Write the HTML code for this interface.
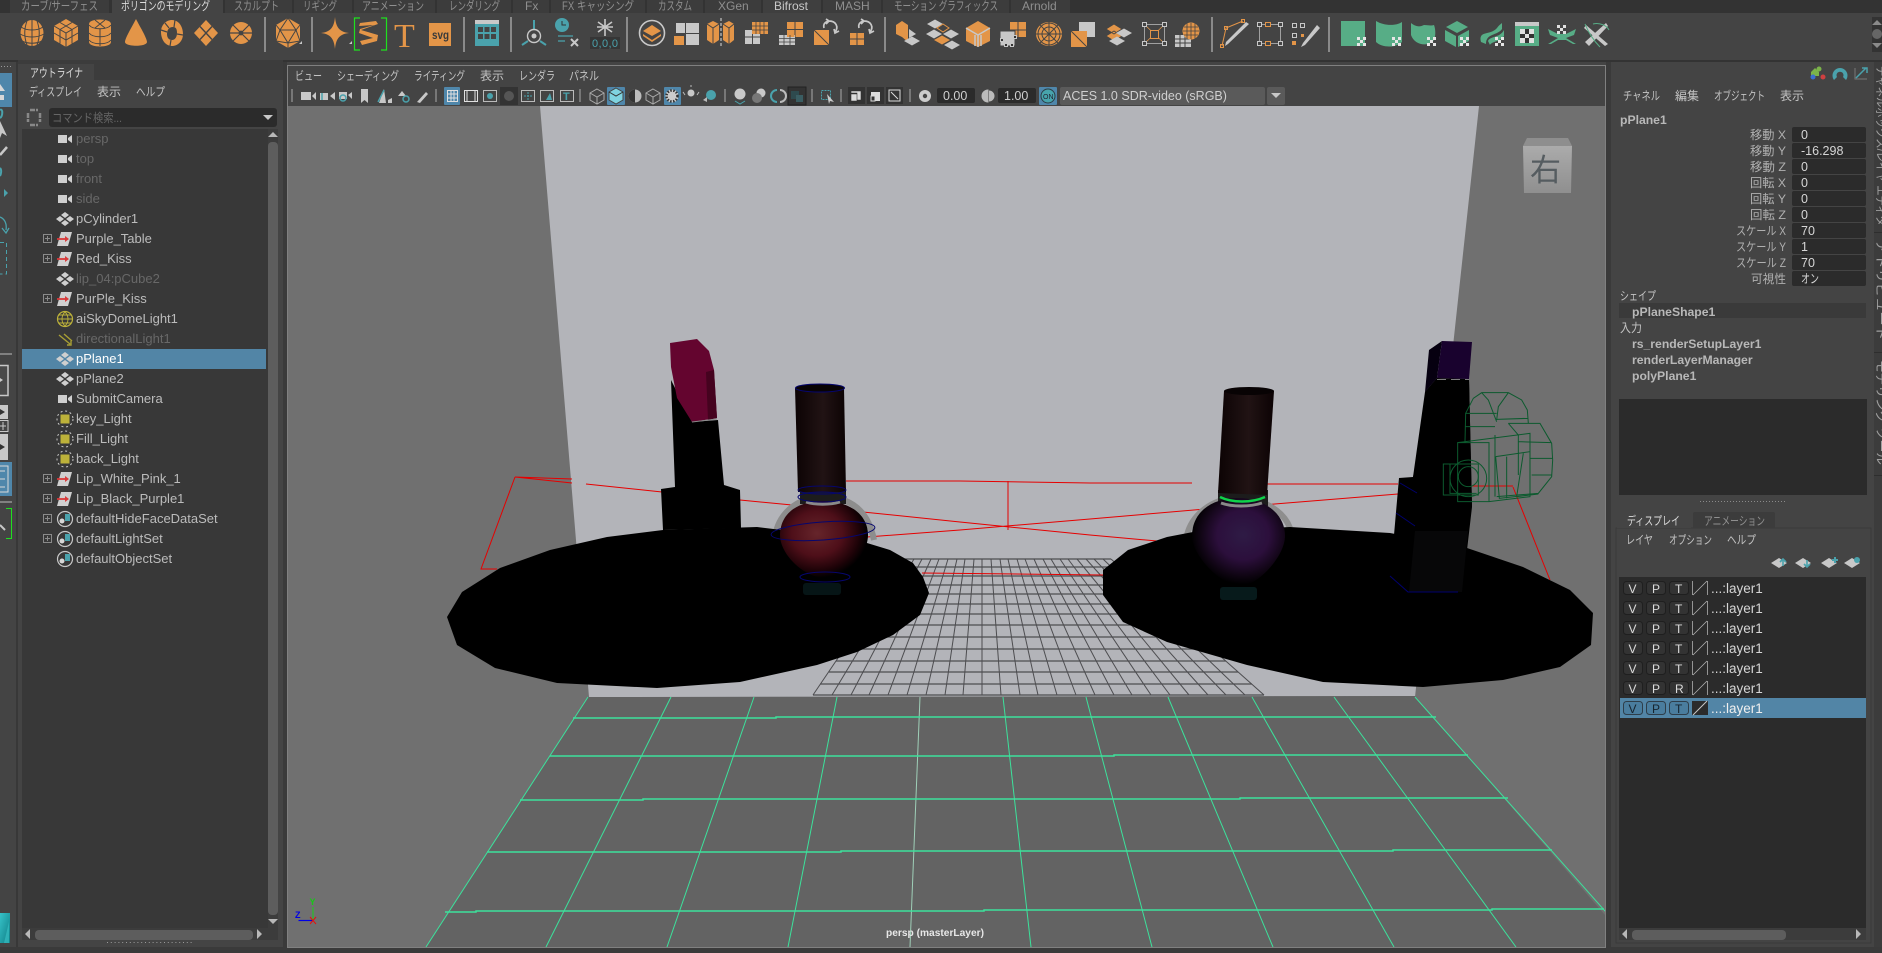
<!DOCTYPE html>
<html lang="ja"><head><meta charset="utf-8"><title>Maya</title>
<style>
html,body{margin:0;padding:0;background:#444;width:1882px;height:953px;overflow:hidden}
svg{display:block}
text{font-family:"Liberation Sans","Noto Sans CJK JP",sans-serif;font-size:12px;fill:#bdbdbd}
.t{font-size:12px;fill:#8f8f8f}
.m{font-size:12px;fill:#c4c4c4}
.r{font-size:13px;fill:#bcbcbc}
.d{font-size:13px;fill:#686868}
.l{font-size:12px;fill:#b0b0b0}
.v{font-size:12.5px;fill:#d6d6d6}
.y{font-size:13.5px;fill:#d6d6d6}
.b{font-size:12.2px;font-weight:bold;fill:#b8b8b8}
.k{font-size:12px;fill:#dcdcdc}
.o{fill:#e39548}
.g{fill:#c8c8c8}
.e{fill:#4aa2ac}
.n{fill:#57ad86}
</style></head><body>
<svg xmlns="http://www.w3.org/2000/svg" width="1882" height="953" viewBox="0 0 1882 953">
<defs>
<linearGradient id="cap" x1="0" x2="1" y1="0" y2="0"><stop offset="0" stop-color="#0c0304"/><stop offset=".55" stop-color="#211314"/><stop offset="1" stop-color="#0c0304"/></linearGradient>
<radialGradient id="rb" cx=".42" cy=".42" r=".58"><stop offset="0" stop-color="#66252b"/><stop offset=".5" stop-color="#4e0f19"/><stop offset=".82" stop-color="#1f0308"/><stop offset="1" stop-color="#000"/></radialGradient>
<radialGradient id="pb" cx=".55" cy=".42" r=".56"><stop offset="0" stop-color="#2e1b45"/><stop offset=".5" stop-color="#2c0f3c"/><stop offset=".82" stop-color="#100514"/><stop offset="1" stop-color="#000"/></radialGradient>
<linearGradient id="cube" x1="0" x2="0" y1="0" y2="1"><stop offset="0" stop-color="#ababab"/><stop offset="1" stop-color="#8f8f8f"/></linearGradient>
<linearGradient id="logo" x1="0" x2="1" y1="0" y2="1"><stop offset="0" stop-color="#36c2c8"/><stop offset="1" stop-color="#0e7e86"/></linearGradient>
<g id="cam"><rect x="58" y="-4" width="9" height="8" fill="#cfcfcf"/><path d="M68 -1 L72 -4 V4 L68 1Z" fill="#cfcfcf"/></g>
<g id="mesh" fill="#cfcfcf"><path d="M65 -7 L69 -4 L65 -1 L61 -4Z M65 1 L69 4 L65 7 L61 4Z M60 -3 L64 0 L60 3 L56 0Z M70 -3 L74 0 L70 3 L66 0Z"/></g>
<g id="grp"><path d="M61 -7 H72 L68 7 H57Z" fill="#cfcfcf"/><path d="M57 0 H67" stroke="#d83a3a" stroke-width="1.800"/><path d="M65 -3 L69 0 L65 3Z" fill="#d83a3a"/></g>
<g id="plus"><rect x="43.5" y="-4.5" width="8" height="8" fill="none" stroke="#8a8a8a"/><path d="M45 -.5 H50 M47.5 -3 V2" stroke="#8a8a8a"/></g>
<g id="set"><circle cx="65" cy="0" r="7.5" fill="none" stroke="#c8c8c8" stroke-width="1.2"/><rect x="65" y="-5" width="5" height="7" fill="#4aa2ac"/><circle cx="62" cy="2" r="2.5" fill="#d8d8d8"/></g>
<g id="lit"><rect x="60.500" y="-4.500" width="9" height="9" fill="#bdb23a"/><circle cx="65" cy="0" r="8" fill="none" stroke="#c8c8c8" stroke-dasharray="2 2.7"/></g>
<g id="btn"><rect x=".5" y=".5" width="19" height="13" rx="3" fill="#333" stroke="#1f1f1f"/></g>
<g id="dia" class="g"><path d="M0 -5 L8 0 L0 5 L-8 0Z"/></g>
<g id="gd" fill="#c8c8c8"><path d="M0 -4.500 L8 0 L0 4.500 L-8 0Z"/></g>
<g id="gor" fill="#e39548"><path d="M0 -4.500 L8 0 L0 4.500 L-8 0Z"/></g>
</defs>

<!-- base -->
<rect width="1882" height="953" fill="#444"/>
<rect width="1882" height="13" fill="#333"/>
<rect y="60" width="1882" height="2" fill="#333"/>
<rect x="0" y="947" width="1882" height="6" fill="#3a3a3a"/>

<!-- shelf tabs -->
<g fill="#3c3c3c">
<rect x="10" width="99" height="13"/><rect x="225" width="67" height="13"/><rect x="294" width="58" height="13"/><rect x="354" width="81" height="13"/><rect x="437" width="74" height="13"/><rect x="513" width="36" height="13"/><rect x="551" width="94" height="13"/><rect x="647" width="56" height="13"/><rect x="705" width="56" height="13"/><rect x="823" width="58" height="13"/><rect x="883" width="126" height="13"/><rect x="1011" width="59" height="13"/>
</g>
<rect x="112" width="111" height="13" fill="#444"/><rect x="763" width="58" height="13" fill="#3f3f3f"/>
<g class="t">
<text class="t" x="21" y="10" textLength="77" lengthAdjust="spacingAndGlyphs">カーブ/サーフェス</text>
<text class="t" x="121" y="10" textLength="89" lengthAdjust="spacingAndGlyphs" style="fill:#ddd">ポリゴンのモデリング</text>
<text class="t" x="234" y="10" textLength="45" lengthAdjust="spacingAndGlyphs">スカルプト</text>
<text class="t" x="303" y="10" textLength="34" lengthAdjust="spacingAndGlyphs">リギング</text>
<text class="t" x="362" y="10" textLength="62" lengthAdjust="spacingAndGlyphs">アニメーション</text>
<text class="t" x="449" y="10" textLength="51" lengthAdjust="spacingAndGlyphs">レンダリング</text>
<text class="t" x="525" y="10">Fx</text>
<text class="t" x="562" y="10" textLength="72" lengthAdjust="spacingAndGlyphs">FX キャッシング</text>
<text class="t" x="658" y="10" textLength="34" lengthAdjust="spacingAndGlyphs">カスタム</text>
<text class="t" x="718" y="10">XGen</text>
<text class="t" x="774" y="10" style="fill:#c8c8c8">Bifrost</text>
<text class="t" x="835" y="10">MASH</text>
<text class="t" x="894" y="10" textLength="104" lengthAdjust="spacingAndGlyphs">モーション グラフィックス</text>
<text class="t" x="1022" y="10">Arnold</text>
</g>

<!-- shelf separators -->
<g fill="#8a8a8a">
<rect x="264" y="17" width="2" height="35"/><rect x="311" y="17" width="2" height="35"/><rect x="463" y="17" width="2" height="35"/><rect x="510" y="17" width="2" height="35"/><rect x="626" y="17" width="2" height="35"/><rect x="884" y="17" width="2" height="35"/><rect x="1211" y="17" width="2" height="35"/><rect x="1328" y="17" width="2" height="35"/>
</g>

<!-- shelf icons: poly primitives -->
<g class="o">
<g transform="translate(32,33)"><ellipse rx="11.5" ry="13"/><path d="M-11 -6 C-5 -2 5 -2 11 -6 M-12 1 C-5 5 5 5 12 1 M-10 8 C-4 11 4 11 10 8 M0 -13 V13 M-5 -12 C-8 -4 -8 4 -5 12 M5 -12 C8 -4 8 4 5 12" fill="none" stroke="#444" stroke-width="1"/></g>
<g transform="translate(66,33)"><path d="M0 -14 L12 -7 V7 L0 14 L-12 7 V-7Z"/><path d="M-12 -7 L0 0 L12 -7 M0 0 V14 M-6 -10.5 L6 -3.5 M6 -10.5 L-6 -3.5 M-12 0 L0 7 L12 0 M-6 -3.5 V10.5 M6 -3.5 V10.5" fill="none" stroke="#444" stroke-width="1"/></g>
<g transform="translate(100,33)"><path d="M-11 -9 C-11 -15 11 -15 11 -9 V9 C11 15 -11 15 -11 9Z"/><path d="M-11 -8 C-7 -3 7 -3 11 -8 M-11 0 C-7 5 7 5 11 0 M-11 7 C-7 12 7 12 11 7 M0 -4 V13 M-5 -13 L5 -5 M5 -13 L-5 -5" fill="none" stroke="#444" stroke-width="1"/></g>
<g transform="translate(136,33)"><path d="M0 -14 C3 -8 11 5 11 9 C11 14 -11 14 -11 9 C-11 5 -3 -8 0 -14Z"/></g>
<g transform="translate(172,33)"><path d="M0 -13 C7 -13 11 -6 11 1 C11 8 6 13 0 13 C-7 13 -11 6 -11 -1 C-11 -8 -6 -13 0 -13Z M1 -6 C-3 -6 -5 -3 -5 1 C-5 5 -3 7 0 7 C3 7 5 4 5 0 C5 -4 4 -6 1 -6Z" fill-rule="evenodd"/><path d="M-11 -3 L-5 -1 M-7 -10 L-3 -5 M3 -13 L2 -6 M11 2 L5 1 M-2 13 L-1 7" stroke="#444" stroke-width="1.2"/></g>
<g transform="translate(206,33)"><path d="M0 -13 L12 0 L0 13 L-12 0Z"/><path d="M-6 -6.5 L6 6.5 M6 -6.5 L-6 6.5" stroke="#444" stroke-width="1.4"/></g>
<g transform="translate(241,33)"><circle r="11"/><path d="M-11 0 H11 M-8 -8 L8 8 M8 -8 L-8 8" stroke="#444" stroke-width="1.2"/><circle r="2.4" fill="#444"/></g>
<g transform="translate(288,33)"><path d="M0 -15 L12 -8 V8 L0 15 L-12 8 V-8Z"/><path d="M0 -15 L-8 -3 L8 -3Z M-8 -3 L0 10 L8 -3 M-12 -8 L-8 -3 M12 -8 L8 -3 M-12 8 L0 10 L12 8 M0 10 V15 M-12 8 L-8 -3 M12 8 L8 -3" fill="none" stroke="#444" stroke-width="1"/></g>
<path transform="translate(335,33)" d="M0 -16 C1 -5 5 -1 14 0 C5 1 1 5 0 16 C-1 5 -5 1 -14 0 C-5 -1 -1 -5 0 -16Z"/>
<g transform="translate(369,33)"><path d="M-9 -10 L7 -12 L9 -9 L-8 -3 L9 2 L8 8 L-7 12 L-9 8 L4 5 L-10 0 L-9 -4 L5 -8 L-10 -7Z"/></g>
<rect x="429" y="23" width="22" height="23"/>
<g transform="translate(652,33)" fill="none"><circle r="12.5" stroke="#c8c8c8" stroke-width="1.6"/><path d="M0 -8 L9 -2 L0 3 L-9 -2Z" fill="#e39548"/><path d="M-9 1 L0 7 L9 1 L9 3 L0 9 L-9 3Z" fill="#e39548"/></g>
</g>
<g fill="#c8c8c8"><path d="M302 44 H299 L302 41Z M352 44 H349 L352 41Z"/></g>
<path d="M360 18 H354.5 V50 H360 M381 18 H386.5 V50 H381" fill="none" stroke="#1fe01f" stroke-width="1.2"/>
<text x="394" y="47" style="font-family:'Liberation Serif',serif;font-size:34px;fill:#e39548">T</text>
<text x="432" y="39" style="font-size:12px;font-weight:bold;fill:#3a3a3a" textLength="17" lengthAdjust="spacingAndGlyphs">svg</text>

<!-- teal icons -->
<g transform="translate(487,33)"><rect x="-12" y="-13" width="24" height="26" fill="#4aa2ac"/><rect x="-12" y="-13" width="24" height="4" fill="#c8c8c8"/><g fill="#444"><rect x="-9" y="-6" width="5" height="5"/><rect x="-2.500" y="-6" width="5" height="5"/><rect x="4" y="-6" width="5" height="5"/><rect x="-9" y="1" width="5" height="5"/><rect x="-2.500" y="1" width="5" height="5"/><rect x="4" y="1" width="5" height="5"/></g></g>
<g transform="translate(534,33)" fill="none"><path d="M0 -13 V-4" stroke="#4aa2ac" stroke-width="2"/><circle r="6.500" cy="3" stroke="#c8c8c8" stroke-width="1.400"/><circle cy="3" r="2.500" fill="#c8c8c8"/><path d="M-12 12 L-6 8 M12 12 L6 8" stroke="#4aa2ac" stroke-width="2"/></g>
<g transform="translate(567,33)"><circle cx="-5" cy="-8" r="7" fill="#4aa2ac"/><path d="M-5 -12 V-8 H-1" stroke="#333" fill="none"/><path d="M-9 3 H6 M-9 8 H-2" stroke="#4aa2ac" stroke-width="1.300"/><path d="M4 6 L11 13 M11 6 L4 13" stroke="#c8c8c8" stroke-width="2"/></g>
<g transform="translate(605,33)"><rect x="-15" y="4" width="30" height="12" fill="#363636"/><path d="M0 -14 V3 M-7 -11 L7 -1 M7 -11 L-7 -1 M-8 -6 H8" stroke="#c8c8c8" stroke-width="1.600"/><text x="-13" y="14" style="font-size:11px;fill:#4aa2ac" textLength="26">0,0,0</text></g>

<!-- squares icon 683 -->
<g fill="#c8c8c8"><rect x="676" y="23" width="9" height="10"/><rect x="686" y="23" width="13" height="10"/><rect x="686" y="34" width="13" height="11"/></g>
<rect x="674" y="36" width="10" height="9" fill="#e39548"/>

<!-- 720 split prisms -->
<g class="o"><path d="M707 24 L713 21 L719 24 V40 L713 44 L707 40Z"/><path d="M723 24 L729 21 L734 24 V40 L729 44 L723 40Z"/></g>
<path d="M707 24 L713 28 L719 24 M713 28 V44 M723 24 L729 28 L734 24 M729 28 V44" stroke="#444" fill="none"/>
<path d="M721 18 V48" stroke="#ddd" stroke-dasharray="3 2"/>
<!-- 756 -->
<g fill="#c8c8c8"><rect x="745" y="30" width="7" height="6.500"/><rect x="753" y="30" width="7" height="6.500"/><rect x="745" y="37.500" width="7" height="6.500"/><rect x="753" y="37.500" width="7" height="6.500"/></g>
<rect x="752" y="22" width="16" height="12" class="o"/><path d="M756 22 V34 M760 22 V34 M764 22 V34 M752 26 H768 M752 30 H768" stroke="#444" stroke-width=".8"/>
<!-- 791 -->
<g class="o"><rect x="787" y="22" width="7.500" height="7"/><rect x="795.500" y="22" width="7.500" height="7"/><rect x="795.500" y="30" width="7.500" height="7"/><rect x="787" y="30" width="7.500" height="7" style="display:none"/></g>
<rect x="779" y="35" width="16" height="10" fill="#c8c8c8"/><rect x="787" y="30" width="7.500" height="7" class="o"/><path d="M784 35 V45 M790 35 V45 M779 38.500 H795 M779 42 H795" stroke="#444" stroke-width=".8"/>
<!-- 827 -->
<rect x="814" y="30" width="15" height="15" class="o"/><path d="M814 30 L829 45" stroke="#444"/>
<path d="M829 21 C836 21 839 27 835 32 M824 28 C823 24 825 22 829 21 M826 19 L829 21 L826 24 M834 29 L835 33 L839 31" stroke="#c8c8c8" stroke-width="1.700" fill="none"/>
<!-- 861 -->
<g class="o"><rect x="850" y="33" width="6.500" height="5.500"/><rect x="857.500" y="33" width="6.500" height="5.500"/><rect x="850" y="39.500" width="6.500" height="5.500"/><rect x="857.500" y="39.500" width="6.500" height="5.500"/></g>
<path d="M864 21 C871 21 874 27 870 32 M859 28 C858 24 860 22 864 21 M861 19 L864 21 L861 24 M869 29 L870 33 L874 31" stroke="#c8c8c8" stroke-width="1.700" fill="none"/>
<!-- 905 -->
<path d="M896 25 L902 21 L908 25 V42 L902 37 L896 34Z" class="o"/><path d="M909 29 L916 34 L909 38Z" fill="#c8c8c8"/>
<use href="#gd" x="912" y="41" transform=""/>
<!-- 941 -->
<use href="#gd" x="935" y="24"/><path d="M943 24 L949 28 L943 32 L937 28Z" fill="none" stroke="#e39548"/>
<use href="#gd" x="934" y="34"/><use href="#gd" x="951" y="34"/><use href="#gor" x="942" y="40"/><use href="#gd" x="952" y="45"/>
<!-- 977 -->
<path d="M978 21 L990 28 V41 L978 47 L966 41 V28Z" class="o"/><path d="M966 28 L978 35 L990 28 M978 35 V47 M975 35 V46 M981 35 V46" stroke="#c8c8c8" fill="none" stroke-width="1.500"/>
<!-- 1012 -->
<rect x="1010" y="22" width="16" height="15" class="o"/><rect x="1000" y="31" width="15" height="15" fill="#c8c8c8" stroke="#444"/><path d="M1018 22 V37 M1010 30 H1026" stroke="#444"/>
<g fill="#333" stroke="#c8c8c8"><rect x="1000.500" y="38.500" width="3" height="3"/><rect x="1004.500" y="43.500" width="3" height="3"/><rect x="1010.500" y="43.500" width="3" height="3"/><rect x="1013.500" y="35.500" width="3" height="3"/></g>
<!-- 1047 -->
<ellipse cx="1049" cy="34" rx="13" ry="12" class="o"/><path d="M1036 34 H1062 M1049 22 V46 M1040 25 L1058 43 M1058 25 L1040 43" stroke="#444"/><circle cx="1049" cy="34" r="7" fill="none" stroke="#444"/><circle cx="1049" cy="34" r="11" fill="none" stroke="#444"/>
<!-- 1084 -->
<rect x="1079" y="22" width="16" height="15" fill="#c8c8c8"/><rect x="1071" y="31" width="16" height="16" class="o"/><path d="M1071 31 L1087 47" stroke="#444"/>
<!-- 1117 -->
<path d="M1114 24 L1122 29 L1114 34 L1106 29Z M1114 31 L1122 36 L1114 41 L1106 36Z" class="o" stroke="#444" stroke-width=".8"/>
<use href="#gd" x="1124" y="33"/><use href="#gd" x="1117" y="41"/>
<!-- 1154 -->
<rect x="1144.500" y="24.500" width="20" height="19" fill="none" stroke="#a0a0a0"/><path d="M1145 25 L1164 43 M1164 25 L1145 43" stroke="#e39548" stroke-width=".8"/><rect x="1150.500" y="30.500" width="8" height="8" fill="#444" stroke="#e39548"/>
<g fill="#444" stroke="#c8c8c8"><rect x="1142.500" y="22.500" width="4" height="4"/><rect x="1162.500" y="22.500" width="4" height="4"/><rect x="1142.500" y="41.500" width="4" height="4"/><rect x="1162.500" y="41.500" width="4" height="4"/></g>
<!-- 1188 -->
<rect x="1175" y="35" width="16" height="12" fill="#c8c8c8"/><path d="M1180 35 V47 M1185 35 V47 M1175 39 H1191 M1175 43 H1191" stroke="#444"/>
<ellipse cx="1191" cy="31" rx="8.500" ry="8.500" class="o"/><path d="M1183 31 H1199 M1191 23 V39 M1184 27 H1198 M1184 35 H1198 M1187 23 V39 M1195 23 V39" stroke="#444" stroke-width=".8"/>
<!-- 1236 -->
<path d="M1222 46 L1226 28 L1243 21" stroke="#e39548" fill="none"/><path d="M1249 24 L1228 44 L1225 46 L1226 42 L1246 22Z" fill="#c8c8c8"/>
<g fill="none" stroke="#e39548"><rect x="1220.500" y="44.500" width="3" height="3"/><rect x="1224.500" y="26.500" width="3" height="3"/><rect x="1241.500" y="19.500" width="3" height="3"/></g>
<!-- 1269 -->
<rect x="1259.500" y="24.500" width="21" height="19" fill="none" stroke="#a0a0a0"/><rect x="1265.500" y="22.500" width="5" height="4" fill="#444" stroke="#e39548"/><rect x="1265.500" y="41.500" width="5" height="4" fill="#444" stroke="#e39548"/>
<g fill="#444" stroke="#c8c8c8"><rect x="1257.500" y="22.500" width="4" height="4"/><rect x="1278.500" y="22.500" width="4" height="4"/><rect x="1257.500" y="41.500" width="4" height="4"/><rect x="1278.500" y="41.500" width="4" height="4"/></g>
<!-- 1304 -->
<g fill="#444" stroke="#c8c8c8"><rect x="1292.500" y="23.500" width="4" height="4"/><rect x="1300.500" y="23.500" width="4" height="4"/><rect x="1292.500" y="33.500" width="4" height="4"/></g>
<rect x="1292" y="41" width="4" height="4" fill="#e39548"/><rect x="1301" y="34" width="3" height="3" fill="#e39548"/>
<path d="M1317 25 L1303 43 L1301 47 L1305 45 L1320 28Z" fill="#c8c8c8"/>

<!-- green UV icons -->
<g class="n">
<rect x="1341" y="21" width="24" height="25"/>
<path d="M1376 21 C1384 26 1396 26 1402 22 V42 C1396 48 1382 48 1376 42Z"/>
<path d="M1411 23 C1416 27 1420 27 1424 25 C1428 25 1431 26 1434 25 C1436 30 1436 40 1432 42 C1425 47 1414 44 1411 35Z"/>
<path d="M1457 21 L1468 27 L1457 33 L1446 27Z"/><path d="M1445 30 L1456 36 V47 L1445 41Z"/><path d="M1469 30 L1458 36 V47 L1469 41Z"/>
<path d="M1481 42 C1478 30 1490 36 1497 28 C1499 25 1501 24 1502 23 V29 C1497 36 1486 33 1486 44Z"/><path d="M1488 41 C1490 36 1500 38 1504 30 V36 C1500 42 1492 41 1490 45Z"/>
<rect x="1515" y="23" width="24" height="23"/>
<path d="M1548 29 L1558 34 H1566 L1576 29 L1574 35 L1566 38 H1558 L1550 35Z"/><path d="M1548 44 L1558 38 H1566 L1576 44 L1573 44 L1566 40 H1558 L1551 44Z"/>
</g>
<rect x="1515" y="22" width="24" height="4" fill="#c8c8c8"/>
<rect x="1520" y="29" width="14" height="14" fill="#333"/>
<g fill="#e0e0e0"><rect x="1520" y="29" width="5" height="5"/><rect x="1529" y="29" width="5" height="5"/><rect x="1525" y="34" width="4" height="4"/><rect x="1520" y="38" width="5" height="5"/><rect x="1529" y="38" width="5" height="5"/></g>
<g fill="#e0e0e0"><rect x="1557" y="25" width="3" height="3"/><rect x="1563" y="25" width="3" height="3"/><rect x="1560" y="28" width="3" height="3"/><rect x="1557" y="31" width="3" height="3"/><rect x="1563" y="31" width="3" height="3"/></g>
<path d="M1585 42 L1606 23 L1608 26 L1589 46Z M1586 25 L1608 44 L1605 46 L1584 28Z" fill="#c8c8c8"/>
<path d="M1585 24 C1590 36 1595 42 1600 47 M1593 24 C1600 22 1607 26 1609 30" stroke="#57ad86" fill="none"/>
<g id="chk" fill="#e6e6e6"><rect x="1357" y="37" width="3" height="3"/><rect x="1363" y="37" width="3" height="3"/><rect x="1360" y="40" width="3" height="3"/><rect x="1357" y="43" width="3" height="3"/><rect x="1363" y="43" width="3" height="3"/></g>
<use href="#chk" x="35"/><use href="#chk" x="70"/><use href="#chk" x="103"/><use href="#chk" x="138"/>
<rect x="1872" y="17" width="10" height="35" fill="#333"/>
<path d="M1877 20 L1882 25 H1872Z M1877 48 L1872 43 H1882Z" fill="#8a8a8a"/><circle cx="1877" cy="34" r="5" fill="#666"/>

<!-- left toolbox -->
<rect x="16" y="62" width="2" height="885" fill="#383838"/>
<g fill="#9a9a9a"><rect x="1" y="66" width="1" height="1"/><rect x="4" y="66" width="1" height="1"/><rect x="7" y="66" width="1" height="1"/><rect x="10" y="66" width="1" height="1"/></g>
<rect y="73" width="12" height="34" fill="#4f87ab"/>
<path d="M0 84 L5 91 H0Z M0 95 H4 V100 H0Z" fill="#d8d8d8"/>
<path d="M0 110 C3 108 3 116 0 118" fill="none" stroke="#4aa2ac" stroke-width="2"/>
<path d="M0 121 L7 136 L2 133 L0 138Z" fill="#c8c8c8"/>
<path d="M0 155 L7 147" stroke="#c8c8c8" stroke-width="2.500"/>
<path d="M0 168 C2 170 1 174 0 176" stroke="#4aa2ac" fill="none" stroke-width="2"/>
<path d="M4 189 L8 193 L4 197Z" fill="#4aa2ac"/>
<path d="M0 217 C5 219 7 224 6 230 M2 228 L6 233 L9 228" stroke="#4aa2ac" fill="none" stroke-width="1.300"/>
<path d="M0 242.500 H6.500 V274 H0" fill="none" stroke="#4aa2ac" stroke-dasharray="4 3"/>
<rect y="353" width="12" height="2" fill="#808080"/>
<rect x="-1" y="365.500" width="9" height="30" fill="#4a4a4a" stroke="#c8c8c8" stroke-width="1.500"/><path d="M0 378 L3 380 L0 382Z" fill="#ccc"/>
<rect y="405" width="8" height="14" fill="#c8c8c8"/><path d="M0 409 L5 412 L0 415Z" fill="#333"/>
<rect x="-1" y="420.500" width="9" height="11" fill="none" stroke="#c8c8c8"/><path d="M0 426 H6 M3 422 V430" stroke="#c8c8c8"/>
<rect y="434" width="8" height="26" fill="#c8c8c8"/><path d="M0 444 L5 447 L0 450Z" fill="#333"/>
<rect y="462" width="12" height="34" fill="#4f87ab"/>
<path d="M0 466 H8 V492 H0 M0 471 H5 M0 479 H5 M0 487 H5" stroke="#d8d8d8" fill="none"/>
<rect y="501" width="12" height="2" fill="#808080"/>
<path d="M6 508.500 H11.500 V538.500 H6" stroke="#1fe01f" fill="none"/>
<path d="M0 525 L5 530" stroke="#c8c8c8" stroke-width="2"/>
<rect y="913" width="10" height="30" fill="url(#logo)"/><path d="M4 943 L9 922 V943Z" fill="#3dc6c9" opacity=".6"/>

<!-- outliner -->
<rect x="18" y="60" width="265" height="4" fill="#3c3c3c"/>
<rect x="94" y="64" width="189" height="16" fill="#3c3c3c"/>
<path d="M20 80 V67 Q20 64 23 64 H91 Q94 64 94 67 V80Z" fill="#444"/>
<rect x="283" y="62" width="4" height="885" fill="#3a3a3a"/>
<text class="k" x="30" y="77" textLength="53" lengthAdjust="spacingAndGlyphs">アウトライナ</text>
<text class="m" x="29" y="96" textLength="53" lengthAdjust="spacingAndGlyphs">ディスプレイ</text>
<text class="m" x="97" y="96" textLength="24" lengthAdjust="spacingAndGlyphs">表示</text>
<text class="m" x="136" y="96" textLength="29" lengthAdjust="spacingAndGlyphs">ヘルプ</text>
<path d="M30 110 H38 M30 125 H38 M28 113 V122 M40 113 V122" stroke="#888" stroke-width="2.500" fill="none" stroke-dasharray="5 1"/>
<rect x="49" y="108" width="228" height="19" rx="3" fill="#2b2b2b"/>
<text x="52" y="122" style="font-size:12px;fill:#666" textLength="70" lengthAdjust="spacingAndGlyphs">コマンド検索...</text>
<path d="M263 115 H273 L268 120Z" fill="#c8c8c8"/>
<rect x="22" y="129" width="246" height="811" fill="#383838"/>
<rect x="268" y="129" width="10" height="811" fill="#3c3c3c"/>
<path d="M273 132 L278 137 H268Z" fill="#b8b8b8"/>
<rect x="268" y="142" width="10" height="773" rx="4" fill="#5d5d5d"/>
<path d="M273 924 L278 919 H268Z" fill="#b8b8b8"/>
<rect x="22" y="928" width="246" height="12" fill="#3c3c3c"/>
<path d="M25 934 L30 929 V939Z M262 934 L257 929 V939Z" fill="#b8b8b8"/>
<rect x="35" y="930" width="218" height="10" rx="4" fill="#5d5d5d"/>
<path d="M107 942.500 H192" stroke="#9a9a9a" stroke-dasharray="1 2.800"/>
<rect x="22" y="349" width="244" height="20" fill="#5285a6"/>
<use href="#cam" y="139"/><use href="#cam" y="159"/><use href="#cam" y="179"/><use href="#cam" y="199"/>
<use href="#mesh" y="219"/><use href="#grp" y="239"/><use href="#plus" y="239"/><use href="#grp" y="259"/><use href="#plus" y="259"/><use href="#mesh" y="279"/><use href="#grp" y="299"/><use href="#plus" y="299"/>
<g transform="translate(65,319)"><circle r="7.500" fill="none" stroke="#bdb23a" stroke-width="1.200"/><path d="M-7 0 H7 M0 -7 C-4 -3 -4 3 0 7 M0 -7 C4 -3 4 3 0 7 M-6 -4 H6 M-6 4 H6" stroke="#bdb23a" fill="none" stroke-width=".9"/></g>
<path d="M59 335 L70 344 M64 334 L72 341 M67 345 H71 V341" stroke="#a89f34" stroke-width="1.400" fill="none"/>
<use href="#mesh" y="359"/><use href="#mesh" y="379"/><use href="#cam" y="399"/>
<use href="#lit" y="419"/><use href="#lit" y="439"/><use href="#lit" y="459"/>
<use href="#grp" y="479"/><use href="#plus" y="479"/><use href="#grp" y="499"/><use href="#plus" y="499"/>
<use href="#set" y="519"/><use href="#plus" y="519"/><use href="#set" y="539"/><use href="#plus" y="539"/><use href="#set" y="559"/>
<g>
<text class="d" x="76" y="143">persp</text><text class="d" x="76" y="163">top</text><text class="d" x="76" y="183">front</text><text class="d" x="76" y="203">side</text>
<text class="r" x="76" y="223">pCylinder1</text><text class="r" x="76" y="243">Purple_Table</text><text class="r" x="76" y="263">Red_Kiss</text>
<text class="d" x="76" y="283">lip_04:pCube2</text><text class="r" x="76" y="303">PurPle_Kiss</text><text class="r" x="76" y="323">aiSkyDomeLight1</text>
<text class="d" x="76" y="343">directionalLight1</text>
<text class="r" x="76" y="363" style="fill:#fff">pPlane1</text><text class="r" x="76" y="383">pPlane2</text><text class="r" x="76" y="403">SubmitCamera</text>
<text class="r" x="76" y="423">key_Light</text><text class="r" x="76" y="443">Fill_Light</text><text class="r" x="76" y="463">back_Light</text>
<text class="r" x="76" y="483">Lip_White_Pink_1</text><text class="r" x="76" y="503">Lip_Black_Purple1</text>
<text class="r" x="76" y="523">defaultHideFaceDataSet</text><text class="r" x="76" y="543">defaultLightSet</text><text class="r" x="76" y="563">defaultObjectSet</text>
</g>

<!-- viewport chrome -->
<rect x="287" y="65" width="1319" height="883" fill="#808080"/>
<rect x="288" y="66" width="1317" height="40" fill="#444"/>
<g>
<text class="m" x="295" y="80" textLength="27" lengthAdjust="spacingAndGlyphs">ビュー</text>
<text class="m" x="337" y="80" textLength="62" lengthAdjust="spacingAndGlyphs">シェーディング</text>
<text class="m" x="414" y="80" textLength="51" lengthAdjust="spacingAndGlyphs">ライティング</text>
<text class="m" x="480" y="80" textLength="24" lengthAdjust="spacingAndGlyphs">表示</text>
<text class="m" x="519" y="80" textLength="36" lengthAdjust="spacingAndGlyphs">レンダラ</text>
<text class="m" x="569" y="80" textLength="30" lengthAdjust="spacingAndGlyphs">パネル</text>
</g>
<!-- viewport toolbar -->
<g fill="#777"><rect x="291" y="89" width="2" height="13"/><rect x="435" y="89" width="2" height="13"/><rect x="579" y="89" width="2" height="13"/><rect x="724" y="89" width="2" height="13"/><rect x="811" y="89" width="2" height="13"/><rect x="840" y="89" width="2" height="13"/><rect x="909" y="89" width="2" height="13"/></g>
<rect x="444" y="87" width="16" height="18" rx="1" fill="#4f87ab"/><rect x="607" y="87" width="18" height="18" rx="1" fill="#4f87ab"/><rect x="664" y="87" width="17" height="18" rx="1" fill="#4f87ab"/><rect x="500" y="87" width="18" height="18" fill="#333"/><rect x="788" y="87" width="18" height="18" fill="#333" stroke="#222"/>
<rect x="848" y="87" width="17" height="17" fill="#333"/><rect x="867" y="87" width="17" height="17" fill="#333"/><rect x="886" y="87" width="17" height="17" fill="#333"/>
<g fill="#c8c8c8">
<rect x="301" y="92" width="10" height="8"/><path d="M312 96 L316 92 V100Z"/>
<rect x="320" y="93" width="8" height="7" /><path d="M330 96 L335 92 V100Z"/>
<rect x="339" y="92" width="8" height="7"/><path d="M348 95 L352 92 V99Z"/>
<path d="M361 89 H368 V103 L364.500 100 L361 103Z"/>
<path d="M379 103 L384 89 L386 103Z"/><path d="M388 100 L392 98 V103 H388Z"/>
<path d="M398 96 L402 91 L406 96Z"/>
<path d="M417 102 L426 92 L428 94 L420 103Z"/>
</g>
<g fill="none" stroke="#4aa2ac" stroke-width="1.500"><path d="M322 93 V100" /><circle cx="343" cy="98" r="3"/><circle cx="406" cy="99" r="3"/><path d="M384 90 L378 102"/></g>
<g fill="none" stroke="#e0e0e0">
<rect x="447.500" y="90.500" width="10" height="11"/><path d="M451 91 V101 M454 91 V101 M448 94 H457 M448 98 H457"/>
<rect x="464.500" y="90.500" width="13" height="11"/><path d="M467 91 V101 M475 91 V101"/>
<rect x="483.500" y="90.500" width="13" height="11" stroke="#bbb"/><rect x="521.500" y="90.500" width="13" height="11" stroke="#bbb"/><rect x="540.500" y="90.500" width="13" height="11" stroke="#bbb"/><rect x="560.500" y="90.500" width="13" height="11" stroke="#bbb"/>
<path d="M597 89 L604 93 V100 L597 104 L590 100 V93Z M590 93 L597 97 L604 93 M597 97 V104" stroke="#aaa"/>
<path d="M653 89 L660 93 V100 L653 104 L646 100 V93Z M646 93 L653 97 L660 93 M653 97 V104" stroke="#aaa"/>
</g>
<circle cx="490" cy="96" r="3" fill="#4aa2ac"/><circle cx="509" cy="96" r="5" fill="#555"/>
<path d="M524 96 H532 M528 92 V100" stroke="#4aa2ac" stroke-dasharray="2 1"/><path d="M546 100 L550 93 L552 100Z" fill="#4aa2ac"/><text x="563" y="100" style="font-size:11px;fill:#4aa2ac;font-weight:bold">T</text>
<path d="M616 88 L623 92 V100 L616 104 L609 100 V92Z" fill="#7fd3e0" stroke="#444"/><path d="M609 92 L616 96 L623 92" fill="none" stroke="#333"/>
<circle cx="635" cy="96" r="6.500" fill="#bbb"/><path d="M635 89.500 A6.500 6.500 0 0 0 635 102.500Z" fill="#333"/>
<circle cx="672" cy="96" r="6.500" fill="#ccc"/><circle cx="672" cy="96" r="5.500" fill="none" stroke="#333" stroke-dasharray="1.500 1.500" stroke-width="2.500"/>
<circle cx="691" cy="93" r="3.500" fill="#c8c8c8"/><path d="M685 95 L683 92 M697 95 L699 92 M691 87 V85" stroke="#bbb"/>
<circle cx="711" cy="95" r="5" fill="#4aa2ac"/><path d="M703 100 L707 97 L707 102Z" fill="#bbb"/>
<circle cx="740" cy="94" r="5.500" fill="#c8c8c8"/><path d="M735 101 L740 104 L745 101" stroke="#4aa2ac" fill="none"/>
<circle cx="761" cy="93" r="4.500" fill="#c8c8c8"/><circle cx="757" cy="98" r="5" fill="#777"/>
<path d="M777 90 A6 6 0 0 0 777 102" stroke="#4aa2ac" fill="none" stroke-width="2"/><path d="M780 90 A6 6 0 0 1 780 102" stroke="#bbb" fill="none" stroke-width="2"/>
<rect x="791" y="91" width="8" height="8" fill="#2e4a4e"/><rect x="796" y="95" width="7" height="7" fill="#3a5d62"/>
<rect x="821.500" y="90.500" width="9" height="9" fill="none" stroke="#4aa2ac" stroke-dasharray="2 1"/><path d="M827 94 L834 102 L830 101 L829 104Z" fill="#ccc"/>
<path d="M851 91 H861 V100 H857 V93 H851Z M851 94 H857 V101 H851Z" fill="#ddd" stroke="#333" stroke-width=".6"/>
<path d="M871 92 H880 V101 H875 V96 H871Z" fill="#ddd"/><rect x="871" y="96" width="4" height="5" fill="none" stroke="#ddd"/>
<rect x="889" y="90" width="11" height="11" fill="none" stroke="#ddd"/><path d="M891 92 L898 99" stroke="#ddd"/>
<circle cx="925" cy="96" r="6" fill="#ccc"/><circle cx="925" cy="96" r="2.200" fill="#444"/>
<rect x="937" y="88" width="38" height="15" rx="2" fill="#2b2b2b"/>
<text x="943" y="100" style="font-size:12.500px;fill:#cfcfcf">0.00</text>
<path d="M988 90 A6 6 0 0 0 988 102Z M989 91 A5 5 0 0 1 989 101" fill="#bbb" stroke="#bbb"/>
<rect x="998" y="88" width="38" height="15" rx="2" fill="#2b2b2b"/>
<text x="1004" y="100" style="font-size:12.500px;fill:#cfcfcf">1.00</text>
<rect x="1039" y="87" width="18" height="18" rx="1" fill="#4f87ab"/><circle cx="1048" cy="96" r="7" fill="#47a4ac" stroke="#2c3e44"/><text x="1043" y="99" style="font-size:7px;fill:#223">ON</text>
<rect x="1060" y="87" width="205" height="18" rx="2" fill="#5a5a5a"/>
<text x="1063" y="100" style="font-size:12.500px;fill:#cfcfcf">ACES 1.0 SDR-video (sRGB)</text>
<rect x="1267" y="87" width="18" height="18" rx="2" fill="#5a5a5a"/><path d="M1271 93 H1281 L1276 98Z" fill="#c8c8c8"/>

<!-- 3D viewport -->
<svg x="288" y="106" width="1317" height="841" viewBox="288 106 1317 841">
<rect x="288" y="106" width="1317" height="841" fill="#707070"/>
<polygon points="540,106 1479,106 1415,697 589,697" fill="#b3b4b9"/>
<polygon points="588,697 1415,696 1605,915 1605,947 426,947" fill="#636363"/>
<!-- pale plane grid -->
<g stroke="#4d4d50" stroke-width="1" fill="none">
<path d="M905 559L813 695M914 559L832 695M922 559L851 695M931 559L869 695M939 559L888 695M948 559L907 695M957 559L926 695M965 559L945 695M974 559L963 695M982 559L982 695M991 559L1001 695M1000 559L1020 695M1008 559L1038 695M1017 559L1057 695M1025 559L1076 695M1034 559L1095 695M1043 559L1114 695M1051 559L1132 695M1060 559L1151 695M1068 559L1170 695M1077 559L1189 695M1086 559L1208 695M1094 559L1226 695M1103 559L1245 695M1111 559L1264 695"/>
<path d="M905 559H1111M900 567H1120M893 576H1130M887 585H1140M881 594H1150M875 604H1162M868 614H1173M860 625H1185M852 637H1199M844 649H1212M836 661H1226M829 672H1238M820 684H1252M813 695H1264" stroke-width="1.200"/>
</g>
<!-- floor grid -->
<g stroke="#3ce29c" stroke-width="1" fill="none">
<path d="M588 697L426 947M671 697L546 947M754 697L667 947M837 697L788 947M1003 697L1031 947M1086 697L1152 947M1168 697L1273 947M1252 697L1394 947M1334 697L1516 947M1415 697L1637 947"/>
<path d="M920 697L910 947" stroke="#9fcfb8"/>
</g>
<g stroke="#3ce29c" stroke-width="1.500" fill="none">
<path d="M573 718H776V717H1436M550 756H1114V755H1468M520 800H643V799H1240V798H1508M487 852H841V851H1393V850H1552M445 912H476V911H984V910H1492V909H1604"/>
</g>
<!-- red plane wire -->
<g stroke="#e60000" stroke-width="1" fill="none">
<path d="M515 477L481 569L497 569M515 477L572 483M515 477L572 479M586 484L662 492M740 500L792 505M863 512L960 522L1090 535L1157 541M867 537L960 530L1090 519L1217 508M846 481L960 481L1090 483L1192 483M1263 505L1398 494M1267 484L1398 484M922 573L1103 575M1008 481V530M1513 487L1550 580M1460 486L1513 486"/>
</g>
<!-- rims behind -->
<path d="M775 537C778 515 796 497 823 497C850 497 868 510 874 540" stroke="#8d8d8d" stroke-width="6" fill="none"/>
<path d="M1187 535C1192 515 1212 498 1238 498C1264 498 1284 512 1290 528" stroke="#8e8e8e" stroke-width="6" fill="none"/>
<!-- discs -->
<polygon points="447,617 462,592 500,568 550,550 607,537 663,530 757,527 807,533 867,543 890,550 913,563 923,577 929,593 920,615 893,635 857,652 817,665 740,682 657,688 557,683 495,668 457,645" fill="#000"/>
<polygon points="1103,595 1103,570 1128,550 1167,537 1193,532 1290,527 1390,533 1467,548 1523,567 1570,590 1593,613 1591,645 1560,667 1503,680 1423,687 1323,682 1247,665 1167,642 1123,622" fill="#000"/>
<!-- left lipstick -->
<polygon points="671,380 675,487 661,489 663,530 741,528 740,490 724,485 718,420 692,422" fill="#000"/>
<polygon points="670,343 697,339 709,351 714,370 717,418 692,422 677,398 671,367" fill="#64052f"/>
<polygon points="706,372 714,370 717,418 708,420" fill="#45031f"/>
<path d="M692 422L717 419" stroke="#8a8a8a"/>
<!-- left bottle -->
<rect x="800" y="488" width="46" height="16" fill="#1c1c1c"/>
<path d="M823 501C850 501 868 515 868 535C868 555 845 578 825 578C805 578 780 555 780 535C780 515 796 501 823 501Z" fill="url(#rb)"/>
<polygon points="795,388 844,388 846,492 798,492" fill="url(#cap)"/>
<ellipse cx="820" cy="388" rx="24.500" ry="4" fill="#080304"/>
<rect x="803" y="583" width="38" height="12" rx="3" fill="#061516"/>
<path d="M806 502C815 505 830 505 840 502" stroke="#8a8a8a" stroke-width="3" fill="none"/>
<g fill="none" stroke="#06066e" stroke-width="1">
<ellipse cx="820" cy="388" rx="24.500" ry="4"/><ellipse cx="822" cy="490" rx="24" ry="4"/><ellipse cx="822" cy="497" rx="24" ry="5"/>
<ellipse cx="823" cy="531" rx="52" ry="9" transform="rotate(-4 823 531)"/><ellipse cx="825" cy="577" rx="25" ry="5"/>
</g>
<!-- right bottle -->
<rect x="1218" y="490" width="50" height="16" fill="#1c1c1c"/>
<path d="M1238 498C1262 498 1285 512 1285 536C1285 556 1258 586 1240 586C1222 586 1192 556 1192 536C1192 512 1212 498 1238 498Z" fill="url(#pb)"/>
<polygon points="1224,391 1274,391 1267,495 1218,493" fill="url(#cap)"/>
<ellipse cx="1249" cy="391" rx="25" ry="4" fill="#080304"/>
<rect x="1220" y="587" width="37" height="13" rx="3" fill="#071a1b"/>
<path d="M1220 497C1232 503 1252 503 1265 497" stroke="#0fd24a" stroke-width="2.500" fill="none"/>
<path d="M1221 503C1232 507 1250 507 1262 503" stroke="#8a8a8a" stroke-width="3" fill="none"/>
<!-- right lipstick -->
<polygon points="1425,392 1437,378 1413,477 1399,478 1394,535 1410,592 1462,593 1472,507 1469,379" fill="#000"/>
<polygon points="1425,392 1437,378 1469,379 1472,507 1413,477" fill="#000"/>
<polygon points="1429,350 1442,341 1437,378 1425,392" fill="#060010"/>
<polygon points="1442,341 1472,342 1469,379 1437,378" fill="#19022e"/>
<path d="M1437 379.500 H1469" stroke="#7c7c7c" stroke-dasharray="9 5"/>
<polygon points="1415,531 1468,531 1462,592 1409,592" fill="#070708"/>
<path d="M1390 576L1408 592L1458 592M1400 483L1417 493M1396 513L1415 526" stroke="#00006e" fill="none"/>
<!-- camera wire -->
<g transform="translate(1090,320) scale(.33333)" fill="none" stroke="#0c5a2e" stroke-width="3">
<path d="M1125 365L1127 280L1150 235L1175 218L1255 218L1295 240L1312 270L1315 310M1175 218L1195 240L1220 305M1255 218L1225 260L1220 300M1127 280H1220M1125 320H1215M1220 298L1315 295"/>
<path d="M1255 310H1350L1385 370L1388 420L1385 470L1345 520L1220 530M1285 365L1385 368M1320 415H1388M1325 465H1385M1255 310L1285 345V465"/>
<path d="M1103 368H1197V545H1103ZM1103 368L1320 340V530L1197 545M1215 345V530"/>
<path d="M1217 410L1320 395V525L1228 535L1217 410M1250 410V535M1300 400L1280 530L1345 522"/>
<path d="M1060 432H1165V525H1060ZM1080 432V520H1160"/>
<circle cx="1135" cy="475" r="55"/><circle cx="1135" cy="470" r="30"/>
</g>
<!-- view cube -->
<polygon points="1527,138 1568,138 1572,146 1523,146" fill="#8e8e8e"/>
<polygon points="1523,146 1572,146 1571,193 1524,193" fill="url(#cube)"/>
<text x="1530" y="181" style="font-size:31px;fill:#555c60;font-family:'Noto Sans CJK JP',sans-serif">右</text>
<!-- axes -->
<path d="M313 920V907" stroke="#19d019" stroke-width="1"/><path d="M298.500 920.500H313" stroke="#0000e6" stroke-width="1.200"/>
<path d="M310 917L316 924M316 917L310 924" stroke="#e61010"/>
<text x="309.500" y="905" style="font-size:9px;font-weight:bold;fill:#16c916">Y</text>
<text x="295" y="918" style="font-size:9px;font-weight:bold;fill:#0000e6">Z</text>
<text x="886" y="936" style="font-size:10px;font-weight:bold;fill:#e8e8e8" textLength="98" lengthAdjust="spacingAndGlyphs">persp (masterLayer)</text>
</svg>

<!-- right panel -->
<rect x="1606" y="62" width="5" height="885" fill="#3a3a3a"/>
<rect x="1611" y="62" width="263" height="885" fill="#444"/>
<path d="M1815 68L1819 72V76H1811V72Z" fill="#7bb34a"/><circle cx="1813" cy="77" r="2.500" fill="#3b6fd0"/><circle cx="1823" cy="77" r="2.500" fill="#d04040"/><circle cx="1819" cy="69" r="2.500" fill="#7bb34a"/>
<path d="M1834 80A7.500 7.500 0 1 1 1846 80L1843 77A3.500 3.500 0 1 0 1837 77Z" fill="#4aa2ac"/>
<path d="M1856 78L1866 68M1862 68H1867V73" stroke="#4aa2ac" fill="none" stroke-width="1.500"/><path d="M1855 68V79H1867" stroke="#777" fill="none"/>
<text class="m" x="1623" y="100" textLength="37" lengthAdjust="spacingAndGlyphs">チャネル</text>
<text class="m" x="1675" y="100" textLength="24" lengthAdjust="spacingAndGlyphs">編集</text>
<text class="m" x="1714" y="100" textLength="51" lengthAdjust="spacingAndGlyphs">オブジェクト</text>
<text class="m" x="1780" y="100" textLength="24" lengthAdjust="spacingAndGlyphs">表示</text>
<text class="b" x="1620" y="124">pPlane1</text>
<g fill="#2b2b2b">
<rect x="1792" y="127" width="74" height="15" rx="2"/><rect x="1792" y="143" width="74" height="15" rx="2"/><rect x="1792" y="159" width="74" height="15" rx="2"/><rect x="1792" y="175" width="74" height="15" rx="2"/><rect x="1792" y="191" width="74" height="15" rx="2"/><rect x="1792" y="207" width="74" height="15" rx="2"/><rect x="1792" y="223" width="74" height="15" rx="2"/><rect x="1792" y="239" width="74" height="15" rx="2"/><rect x="1792" y="255" width="74" height="15" rx="2"/><rect x="1792" y="271" width="74" height="15" rx="2"/>
</g>
<g>
<text class="l" x="1750" y="139" textLength="36" lengthAdjust="spacingAndGlyphs">移動 X</text>
<text class="l" x="1750" y="155" textLength="36" lengthAdjust="spacingAndGlyphs">移動 Y</text>
<text class="l" x="1750" y="171" textLength="36" lengthAdjust="spacingAndGlyphs">移動 Z</text>
<text class="l" x="1750" y="187" textLength="36" lengthAdjust="spacingAndGlyphs">回転 X</text>
<text class="l" x="1750" y="203" textLength="36" lengthAdjust="spacingAndGlyphs">回転 Y</text>
<text class="l" x="1750" y="219" textLength="36" lengthAdjust="spacingAndGlyphs">回転 Z</text>
<text class="l" x="1736" y="235" textLength="50" lengthAdjust="spacingAndGlyphs">スケール X</text>
<text class="l" x="1736" y="251" textLength="50" lengthAdjust="spacingAndGlyphs">スケール Y</text>
<text class="l" x="1736" y="267" textLength="50" lengthAdjust="spacingAndGlyphs">スケール Z</text>
<text class="l" x="1751" y="283" textLength="35" lengthAdjust="spacingAndGlyphs">可視性</text>
</g>
<g>
<text class="v" x="1801" y="139">0</text><text class="v" x="1801" y="155">-16.298</text><text class="v" x="1801" y="171">0</text><text class="v" x="1801" y="187">0</text><text class="v" x="1801" y="203">0</text><text class="v" x="1801" y="219">0</text><text class="v" x="1801" y="235">70</text><text class="v" x="1801" y="251">1</text><text class="v" x="1801" y="267">70</text>
<text class="v" x="1801" y="283" textLength="18" lengthAdjust="spacingAndGlyphs">オン</text>
</g>
<text class="m" x="1620" y="300" textLength="36" lengthAdjust="spacingAndGlyphs">シェイプ</text>
<rect x="1619" y="303" width="247" height="15" fill="#3a3a3a"/>
<text class="b" x="1632" y="316">pPlaneShape1</text>
<text class="m" x="1620" y="332" textLength="22" lengthAdjust="spacingAndGlyphs">入力</text>
<text class="b" x="1632" y="348">rs_renderSetupLayer1</text>
<text class="b" x="1632" y="364">renderLayerManager</text>
<text class="b" x="1632" y="380">polyPlane1</text>
<rect x="1619" y="399" width="248" height="96" fill="#2b2b2b"/>
<path d="M1700 501.500H1785" stroke="#8a8a8a" stroke-dasharray="1 2"/>
<rect x="1616" y="528" width="255" height="415" fill="#444" stroke="#3a3a3a"/>
<path d="M1617 528V514Q1617 512 1619 512H1689Q1691 512 1691 514V528Z" fill="#444"/>
<path d="M1693 528V514Q1693 512 1695 512H1773Q1775 512 1775 514V528Z" fill="#3c3c3c"/>
<text class="k" x="1627" y="525" textLength="53" lengthAdjust="spacingAndGlyphs">ディスプレイ</text>
<text class="t" x="1704" y="525" textLength="61" lengthAdjust="spacingAndGlyphs">アニメーション</text>
<text class="m" x="1626" y="544" textLength="27" lengthAdjust="spacingAndGlyphs">レイヤ</text>
<text class="m" x="1669" y="544" textLength="43" lengthAdjust="spacingAndGlyphs">オプション</text>
<text class="m" x="1727" y="544" textLength="29" lengthAdjust="spacingAndGlyphs">ヘルプ</text>
<g transform="translate(0,563)">
<use href="#dia" x="1779"/><path d="M1783 3V-3M1780 -1L1783 -4L1786 -1" stroke="#4aa2ac" fill="none" stroke-width="1.600"/>
<use href="#dia" x="1803"/><path d="M1807 -3V3M1804 1L1807 4L1810 1" stroke="#4aa2ac" fill="none" stroke-width="1.600"/>
<use href="#dia" x="1829"/><path d="M1835 -6V0M1832 -3H1838" stroke="#4aa2ac" stroke-width="2"/>
<use href="#dia" x="1852"/><circle cx="1857" cy="-3" r="3" fill="#4aa2ac"/>
</g>
<rect x="1619" y="577" width="247" height="351" fill="#2b2b2b"/>
<rect x="1620" y="698" width="246" height="20" fill="#5285a6"/>
<!-- layer rows -->
<g id="rowa">
<use href="#btn" x="1623" y="581"/><use href="#btn" x="1646" y="581"/><use href="#btn" x="1669" y="581"/>
<text class="k" x="1628.500" y="593" style="font-size:12px">V</text><text class="k" x="1652" y="593" style="font-size:12px">P</text><text class="k" x="1675" y="593" style="font-size:12px">T</text>
<path d="M1692.500 581V595M1707.500 581V595M1693 595L1707 581" stroke="#b0b0b0" fill="none" stroke-width=".8"/>
<text class="y" x="1711" y="593">...:layer1</text>
</g>
<use href="#rowa" y="20"/><use href="#rowa" y="40"/><use href="#rowa" y="60"/><use href="#rowa" y="80"/>
<g>
<use href="#btn" x="1623" y="681"/><use href="#btn" x="1646" y="681"/><use href="#btn" x="1669" y="681"/>
<text class="k" x="1628.500" y="693">V</text><text class="k" x="1652" y="693">P</text><text class="k" x="1675" y="693">R</text>
<path d="M1692.500 681V695M1707.500 681V695M1693 695L1707 681" stroke="#b0b0b0" fill="none" stroke-width=".8"/>
<text class="y" x="1711" y="693">...:layer1</text>
</g>
<g fill="#4a7d9e" stroke="#2e3e4a"><rect x="1623.500" y="701.500" width="19" height="13" rx="3"/><rect x="1646.500" y="701.500" width="19" height="13" rx="3"/><rect x="1669.500" y="701.500" width="19" height="13" rx="3"/></g>
<text x="1628.500" y="713" style="fill:#17242e">V</text><text x="1652" y="713" style="fill:#17242e">P</text><text x="1675" y="713" style="fill:#17242e">T</text>
<rect x="1692" y="701" width="16" height="14" fill="#2b2b2b"/><path d="M1693 715L1707 701" stroke="#c8c8c8"/>
<text class="y" x="1711" y="713" style="fill:#f0f0f0">...:layer1</text>
<rect x="1619" y="928" width="247" height="12" fill="#3c3c3c"/>
<path d="M1622 934L1627 929V939ZM1861 934L1856 929V939Z" fill="#b8b8b8"/>
<rect x="1632" y="930" width="154" height="10" rx="4" fill="#5d5d5d"/>

<!-- far right tabs -->
<rect x="1874" y="62" width="8" height="885" fill="#3c3c3c"/>
<path d="M1874 232.500H1882M1874 352.500H1882M1874 475.500H1882" stroke="#2e2e2e"/>
<g>
<text transform="translate(1877,66) rotate(90)" style="font-size:12px;fill:#a0a0a0" textLength="160" lengthAdjust="spacingAndGlyphs">チャネルボックス/レイヤ エディタ</text>
<text transform="translate(1877,240) rotate(90)" style="font-size:12px;fill:#a0a0a0" textLength="100" lengthAdjust="spacingAndGlyphs">アトリビュート</text>
<text transform="translate(1877,360) rotate(90)" style="font-size:12px;fill:#a0a0a0" textLength="105" lengthAdjust="spacingAndGlyphs">モデリング ツール</text>
</g>
</svg>
</body></html>
